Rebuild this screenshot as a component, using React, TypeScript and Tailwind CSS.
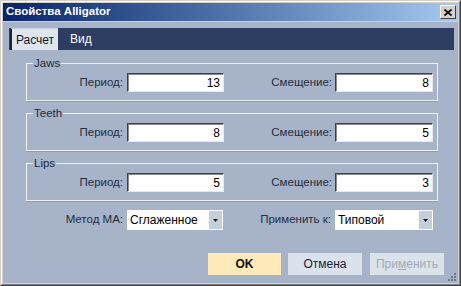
const font = 'font-["Liberation_Sans",Arial,sans-serif]';

const Field = ({ value }: { value: string }) => (
  <div className="h-[19px] flex items-center justify-end bg-white border border-t-[#404040] border-l-[#404040] border-r-[#ece9e0] border-b-[#ece9e0] shadow-[inset_1px_1px_0_#8a8a8a] pr-[3px] text-[12px] text-black">
    {value}
  </div>
);

const Group = ({ title, period, shift }: { title: string; period: string; shift: string }) => (
  <div className="relative h-[38px] border border-[#eef1f6] shadow-[0_1px_0_#8d9ab1] flex items-center pt-[1px]">
    <span className="absolute -top-[8px] left-[6px] px-[1px] bg-[#a7b3c8] text-[11.5px] text-[#1f2a3e] leading-[14px]">
      {title}
    </span>
    <div className="w-[96px] text-right text-[11.5px] text-[#232d40]">Период:</div>
    <div className="w-[97px] ml-[4px]">
      <Field value={period} />
    </div>
    <div className="w-[108px] text-right text-[11.5px] text-[#232d40]">Смещение:</div>
    <div className="w-[98px] ml-[3px]">
      <Field value={shift} />
    </div>
  </div>
);

const Select = ({ value }: { value: string }) => (
  <div className="h-[20px] flex items-stretch bg-white p-[1px]">
    <div className="flex-1 flex items-center pl-[2px] text-[12px] text-black">{value}</div>
    <div className="w-[13px] bg-[#c5cedb] flex items-center justify-center">
      <svg width="5" height="3" viewBox="0 0 5 3">
        <path d="M0 0h5L2.5 3z" fill="#1a1a1a" />
      </svg>
    </div>
  </div>
);

export default function App() {
  return (
    <div className={`w-[461px] h-[286px] ${font} border border-t-[#d4d0c8] border-l-[#d4d0c8] border-r-[#404040] border-b-[#404040]`}>
      <div className="h-full border border-t-white border-l-white border-r-[#808080] border-b-[#808080] bg-[#d4d0c8] p-[1px] flex flex-col">
        <div className="h-[18px] bg-linear-to-r from-[#0a246a] to-[#a6caf0] flex items-center pl-[3px] pr-[2px]">
          <span className="text-white font-bold text-[11.5px]">Свойства Alligator</span>
          <div className="ml-auto w-[16px] h-[14px] bg-[#d4d0c8] border border-t-white border-l-white border-r-[#404040] border-b-[#404040] flex items-center justify-center">
            <svg width="8" height="7" viewBox="0 0 8 7">
              <path d="M0.5 0.5l7 6M7.5 0.5l-7 6" stroke="#000" strokeWidth="1.6" />
            </svg>
          </div>
        </div>
        <div className="flex-1 mt-[1px] bg-[#a7b3c8] flex flex-col relative">
          <div className="mt-[6px] ml-[6px] mr-[4px] h-[22px] bg-[#26365a] bg-[radial-gradient(#33456a_0.6px,transparent_0.8px)] bg-[length:2px_2px] flex items-stretch">
            <div className="w-[48px] ml-[1px] bg-[#dfe5ed] border-l-2 border-t border-l-[#1a253d] border-t-[#c9d2df] flex items-center justify-center text-[12px] text-[#101828]">
              Расчет
            </div>
            <div className="ml-[12px] flex items-center text-[12px] text-white">Вид</div>
          </div>
          <div className="ml-[23px] w-[412px] mt-[13px] flex flex-col gap-[12px]">
            <Group title="Jaws" period="13" shift="8" />
            <Group title="Teeth" period="8" shift="5" />
            <Group title="Lips" period="5" shift="3" />
          </div>
          <div className="ml-[24px] w-[412px] mt-[9px] flex items-center">
            <div className="w-[96px] text-right text-[11.5px] text-[#232d40]">Метод МА:</div>
            <div className="w-[96px] ml-[4px]">
              <Select value="Сглаженное" />
            </div>
            <div className="w-[108px] text-right text-[11.5px] text-[#232d40]">Применить к:</div>
            <div className="w-[98px] ml-[4px]">
              <Select value="Типовой" />
            </div>
          </div>
          <div className="mt-[23px] mr-[14px] flex justify-end gap-[7px] text-[12px]">
            <div className="w-[73px] h-[22px] bg-[#fde9b9] flex items-center justify-center font-bold text-[#111]">OK</div>
            <div className="w-[74px] h-[22px] bg-[#dce2eb] flex items-center justify-center text-[#1a2233]">Отмена</div>
            <div className="w-[74px] h-[22px] ml-[1px] bg-[#dce2ea] flex items-center justify-center text-[#a3abb8]">
              При<span className="underline">м</span>енить
            </div>
          </div>
          <svg className="absolute right-[1px] bottom-[1px]" width="10" height="10" viewBox="0 0 10 10">
            <g fill="#6b7890">
              <rect x="7" y="1" width="2" height="2" />
              <rect x="4" y="4" width="2" height="2" />
              <rect x="7" y="4" width="2" height="2" />
              <rect x="1" y="7" width="2" height="2" />
              <rect x="4" y="7" width="2" height="2" />
              <rect x="7" y="7" width="2" height="2" />
            </g>
          </svg>
        </div>
      </div>
    </div>
  );
}
